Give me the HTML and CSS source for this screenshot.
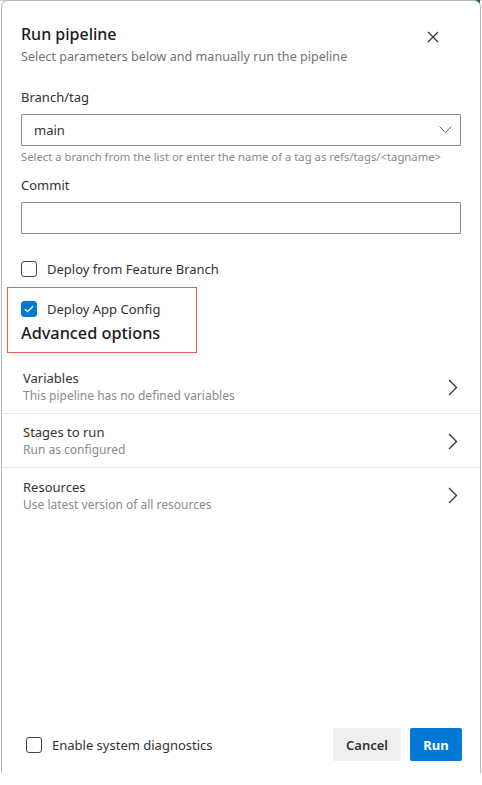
FILE: index.html
```html
<!DOCTYPE html>
<html>
<head>
<meta charset="utf-8">
<link rel="stylesheet" href="styles.css">
</head>
<body>
<div class="topline"></div>
<div class="teal"></div>
<div class="panel">
  <div class="header">
    <div class="titles">
      <div class="title">Run pipeline</div>
      <div class="subtitle">Select parameters below and manually run the pipeline</div>
    </div>
    <svg class="close" width="12" height="12" viewBox="0 0 12 12"><path d="M1 1L11 11M11 1L1 11" stroke="#333" stroke-width="1.2" fill="none"/></svg>
  </div>
  <div class="form">
    <div class="label">Branch/tag</div>
    <div class="field select"><span>main</span>
      <svg width="13" height="7" viewBox="0 0 13 7"><path d="M0.5 0.5L6.5 6.5L12.5 0.5" stroke="#666" stroke-width="1" fill="none"/></svg>
    </div>
    <div class="helper">Select a branch from the list or enter the name of a tag as refs/tags/&lt;tagname&gt;</div>
    <div class="label label2">Commit</div>
    <div class="field"></div>
    <div class="check check1"><span class="box"></span><span>Deploy from Feature Branch</span></div>
    <div class="check check2"><span class="box on"><svg width="10" height="8" viewBox="0 0 10 8"><path d="M1 4.2L3.6 6.6L9 1.2" stroke="#fff" stroke-width="1.3" fill="none"/></svg></span><span>Deploy App Config</span></div>
    <div class="adv">Advanced options</div>
  </div>
  <div class="rows">
    <div class="row">
      <div class="rtext"><div class="rtitle">Variables</div><div class="rsub">This pipeline has no defined variables</div></div>
      <svg class="chev" width="10" height="17" viewBox="0 0 10 17"><path d="M1 1L8.5 8.5L1 16" stroke="#333" stroke-width="1.3" fill="none"/></svg>
    </div>
    <div class="row">
      <div class="rtext"><div class="rtitle">Stages to run</div><div class="rsub">Run as configured</div></div>
      <svg class="chev" width="10" height="17" viewBox="0 0 10 17"><path d="M1 1L8.5 8.5L1 16" stroke="#333" stroke-width="1.3" fill="none"/></svg>
    </div>
    <div class="row last">
      <div class="rtext"><div class="rtitle">Resources</div><div class="rsub">Use latest version of all resources</div></div>
      <svg class="chev" width="10" height="17" viewBox="0 0 10 17"><path d="M1 1L8.5 8.5L1 16" stroke="#333" stroke-width="1.3" fill="none"/></svg>
    </div>
  </div>
  <div class="spacer"></div>
  <div class="footer">
    <div class="check fcheck"><span class="box"></span><span>Enable system diagnostics</span></div>
    <div class="buttons">
      <button class="btn cancel">Cancel</button>
      <button class="btn run">Run</button>
    </div>
  </div>
  <div class="annot"></div>
</div>
</body>
</html>
```
FILE: styles.css
```css
html, body {
  margin: 0;
  padding: 0;
  background: #fff;
}
body {
  width: 482px;
  height: 785px;
  position: relative;
  overflow: hidden;
  font-family: "Noto Sans", "Open Sans", sans-serif;
  color: #333;
}
.topline {
  position: absolute;
  left: 0;
  top: 0;
  width: 482px;
  height: 1px;
  background: #d0d0d0;
}
.teal {
  position: absolute;
  left: 452px;
  top: 0;
  width: 28px;
  height: 3px;
  background: #1f4f4f;
}
.panel {
  position: relative;
  margin-left: 1px;
  width: 480px;
  height: 773px;
  box-sizing: border-box;
  border: 1px solid #b8b8b8;
  border-bottom: none;
  border-radius: 7px 7px 0 0;
  background: #fff;
  display: flex;
  flex-direction: column;
}
.header {
  display: flex;
  justify-content: space-between;
  align-items: flex-start;
  padding: 21px 0 0 19px;
}
.title {
  font-size: 16px;
  line-height: 24px;
  font-weight: 500;
  color: #1b1b1b;
}
.subtitle {
  margin-top: 2px;
  font-size: 12.6px;
  line-height: 18px;
  color: #737373;
}
.close {
  margin: 9px 41px 0 0;
}
.form {
  padding: 0 19px;
  display: flex;
  flex-direction: column;
}
.label {
  margin-top: 21px;
  font-size: 13px;
  line-height: 20px;
  color: #333;
}
.label2 {
  margin-top: 10px;
}
.field {
  margin-top: 7px;
  height: 32px;
  box-sizing: border-box;
  border: 1px solid #8a8a8a;
  border-radius: 1px;
}
.select {
  display: flex;
  align-items: center;
  justify-content: space-between;
  padding: 0 8px 0 12px;
  font-size: 13px;
  color: #333;
}
.select svg {
  margin-top: -2px;
}
.helper {
  margin-top: 3px;
  font-size: 11.3px;
  line-height: 16px;
  color: #8a8a8a;
  white-space: nowrap;
}
.check {
  display: flex;
  align-items: center;
  height: 20px;
  font-size: 13px;
  color: #333;
}
.check .box {
  width: 16px;
  height: 16px;
  box-sizing: border-box;
  border: 1px solid #444;
  border-radius: 3px;
  margin-right: 10px;
  display: flex;
  align-items: center;
  justify-content: center;
}
.check .box.on {
  background: #0078d4;
  border-color: #0078d4;
}
.check1 {
  margin-top: 25px;
}
.check2 {
  margin-top: 20px;
}
.adv {
  margin-top: 2px;
  font-size: 16.3px;
  line-height: 24px;
  font-weight: 500;
  color: #1b1b1b;
}
.rows {
  margin-top: 15px;
}
.row {
  height: 54px;
  box-sizing: border-box;
  border-bottom: 1px solid #e6e6e6;
  display: flex;
  align-items: center;
  justify-content: space-between;
  padding: 0 22px 0 21px;
}
.row.last {
  border-bottom: none;
}
.rtext {
  display: flex;
  flex-direction: column;
  margin-top: 1px;
}
.rtitle {
  font-size: 13px;
  line-height: 18px;
  color: #333;
}
.rsub {
  font-size: 12px;
  line-height: 18px;
  color: #8a8a8a;
}
.chev {
  margin-top: 1px;
}
.spacer {
  flex: 1;
}
.footer {
  display: flex;
  align-items: center;
  justify-content: space-between;
  padding: 0 18px 12px 24px;
}
.fcheck {
  margin-top: 1px;
}
.buttons {
  display: flex;
  gap: 9px;
}
.btn {
  height: 33px;
  border: none;
  border-radius: 2px;
  font-family: "Noto Sans", "Open Sans", sans-serif;
  font-size: 13px;
  font-weight: 600;
  padding: 0;
}
.cancel {
  width: 68px;
  background: #efefef;
  color: #333;
}
.run {
  width: 52px;
  background: #0078d4;
  color: #fff;
  font-weight: 700;
}
.annot {
  position: absolute;
  left: 5px;
  top: 286px;
  width: 190px;
  height: 66px;
  box-sizing: border-box;
  border: 1px solid #e25c5c;
}
```
